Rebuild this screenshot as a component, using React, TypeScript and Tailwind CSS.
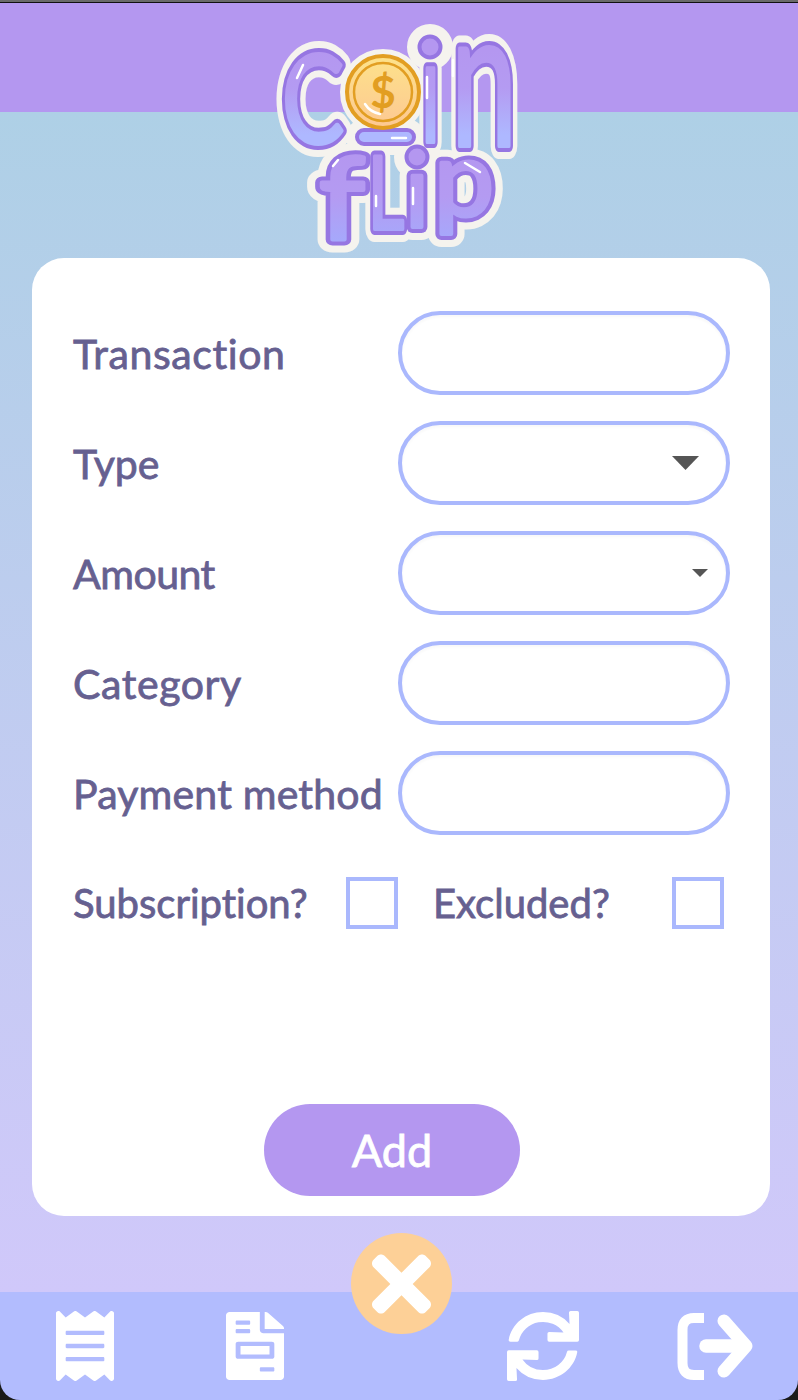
import { FaReceipt, FaFileInvoice, FaSync, FaTimes } from "react-icons/fa";

const topLetters = [
  { ch: "C", x: 22, y: 143, size: 122, len: 62 },
  { ch: "ı", x: 160.5, y: 142, size: 146, len: 20 },
  { ch: "n", x: 191, y: 146, size: 192, len: 66 },
];

const bottomLetters = [
  { ch: "f", x: 59, y: 240, size: 114, len: 46 },
  { ch: "L", x: 108, y: 229, size: 101, len: 36 },
  { ch: "ı", x: 145, y: 227, size: 101, len: 24 },
  { ch: "p", x: 174, y: 216, size: 104, len: 60 },
];

const Logo = () => {
  return (
    <svg viewBox="0 0 280 270" className="absolute left-[260px] top-0 w-[280px] h-[270px]">
      <defs>
        <linearGradient id="coinTop" gradientUnits="userSpaceOnUse" x1="0" y1="50" x2="0" y2="135">
          <stop offset="0" stopColor="#b497f0" />
          <stop offset="0.45" stopColor="#b49bf2" />
          <stop offset="1" stopColor="#aeb8ff" />
        </linearGradient>
        <linearGradient id="flipBottom" gradientUnits="userSpaceOnUse" x1="0" y1="155" x2="0" y2="240">
          <stop offset="0" stopColor="#b497f0" />
          <stop offset="0.5" stopColor="#b49bf2" />
          <stop offset="1" stopColor="#a6a8fb" />
        </linearGradient>
        <linearGradient id="coinFace" x1="0" y1="0" x2="0" y2="1">
          <stop offset="0" stopColor="#fde28a" />
          <stop offset="1" stopColor="#fdc893" />
        </linearGradient>
        <g id="wordTop" fontFamily="Lato, sans-serif" strokeLinejoin="round" strokeLinecap="round">
          {topLetters.map((l, i) => (
            <text key={i} x={l.x} y={l.y} fontSize={l.size} textLength={l.len} lengthAdjust="spacingAndGlyphs">
              {l.ch}
            </text>
          ))}
        </g>
        <g id="wordBottom" fontFamily="Lato, sans-serif" strokeLinejoin="round" strokeLinecap="round">
          {bottomLetters.map((l, i) => (
            <text key={i} x={l.x} y={l.y} fontSize={l.size} textLength={l.len} lengthAdjust="spacingAndGlyphs">
              {l.ch}
            </text>
          ))}
        </g>
      </defs>

      {/* sticker edge */}
      <g stroke="#f5f3ee" strokeWidth="26" fill="#f5f3ee">
        <use href="#wordTop" />
        <use href="#wordBottom" />
        <circle cx="170" cy="47" r="10" />
        <circle cx="157" cy="157" r="10" />
        <circle cx="123" cy="92" r="30" />
        <rect x="99" y="132" width="53" height="10" rx="5" />
      </g>

      {/* outline */}
      <g stroke="#9676e2" strokeWidth="12" fill="#9676e2">
        <use href="#wordTop" />
        <use href="#wordBottom" />
      </g>

      {/* body */}
      <use href="#wordTop" stroke="url(#coinTop)" strokeWidth="4" fill="url(#coinTop)" />
      <use href="#wordBottom" stroke="url(#flipBottom)" strokeWidth="4" fill="url(#flipBottom)" />

      <circle cx="170" cy="47" r="10.5" fill="#b497f0" stroke="#9676e2" strokeWidth="4" />
      <circle cx="157" cy="157" r="10.5" fill="#b497f0" stroke="#9676e2" strokeWidth="4" />
      <rect x="97" y="130" width="57" height="14" rx="7" fill="#aeb8ff" stroke="#9676e2" strokeWidth="4" />

      <circle cx="123" cy="92" r="36" fill="url(#coinFace)" stroke="#e29e22" strokeWidth="4" />
      <circle cx="123" cy="92" r="29" fill="none" stroke="#e29e22" strokeWidth="2.5" />
      <text x="123" y="108" textAnchor="middle" fontFamily="Lato, sans-serif" fontWeight="700" fontSize="44" fill="#e29e22">
        $
      </text>

      <g stroke="#ffffff" strokeWidth="2.5" strokeLinecap="round" fill="none">
        <path d="M37 78 L43 65" />
        <path d="M167 77 V98" />
        <path d="M193 60 V76" />
        <path d="M132 138 H146" />
        <path d="M73 166 L78 160" />
        <path d="M116 196 V206" />
        <path d="M153 188 V204" />
        <path d="M205 163 L220 172" />
        <path d="M105 104 Q110 112 120 114" />
      </g>
    </svg>
  );
};

const SignOutIcon = ({ className }: { className: string }) => {
  return (
    <svg viewBox="0 0 76 67" className={className} fill="none" stroke="currentColor">
      <path d="M27 5 H17 Q5.5 5 5.5 17 V50 Q5.5 62 17 62 H27" strokeWidth="10" strokeLinejoin="round" />
      <path d="M29 33 H65" strokeWidth="13.5" strokeLinecap="round" />
      <path d="M47 8 L69 33 L47 58" strokeWidth="13" strokeLinecap="round" strokeLinejoin="round" />
    </svg>
  );
};

const Field = ({ label, spacing, arrow }: { label: string; spacing?: string; arrow?: "large" | "small" }) => {
  return (
    <div className="flex items-center justify-between h-[84px]">
      <span className={`text-[41px] leading-none text-[#666090] [-webkit-text-stroke:0.8px] [font-variant-ligatures:none] ${spacing ?? ""}`}>{label}</span>
      <div className="w-[332px] h-[84px] shrink-0 flex items-center justify-end border-4 border-[#aab8fd] rounded-full bg-white shadow-[inset_0_2px_3px_rgba(0,0,0,0.03)]">
        {arrow === "large" && (
          <svg viewBox="0 0 27 14" className="w-[27px] h-[14px] mr-[27px]">
            <path d="M0 0 H27 L13.5 14 Z" fill="#555555" />
          </svg>
        )}
        {arrow === "small" && (
          <svg viewBox="0 0 16 8" className="w-[16px] h-[8px] mr-[18px]">
            <path d="M0 0 H16 L8 8 Z" fill="#555555" />
          </svg>
        )}
      </div>
    </div>
  );
};

const Check = ({ label, width }: { label: string; width: string }) => {
  return (
    <div className={`flex items-center justify-between ${width}`}>
      <span className="text-[40px] leading-none text-[#666090] [-webkit-text-stroke:0.8px] [font-variant-ligatures:none]">{label}</span>
      <div className="w-[52px] h-[52px] shrink-0 border-4 border-[#aab8fd] bg-white"></div>
    </div>
  );
};

export default function App() {
  return (
    <div className="relative w-[798px] h-[1400px] bg-[#1a1a1a] overflow-hidden font-['Lato']">
      <div className="h-[2px] bg-[#6a6a6a]"></div>
      <div className="h-px bg-[#111111]"></div>

      <div className="flex flex-col h-[1397px] rounded-b-[20px] overflow-hidden">
        <header className="h-[109px] shrink-0 bg-[#b497f0]"></header>

        <main className="flex-1 pt-[146px] pl-[32px] pr-[28px] pb-[76px] bg-gradient-to-b from-[#aed0e6] to-[#d0c8fa]">
          <section className="flex flex-col h-full pt-[53px] pb-[20px] pl-[41px] pr-[40px] bg-white rounded-[32px]">
            <div className="flex flex-col gap-[26px]">
              <Field label="Transaction" spacing="tracking-[0.6px]" />
              <Field label="Type" arrow="large" />
              <Field label="Amount" spacing="tracking-[-0.5px]" arrow="small" />
              <Field label="Category" spacing="tracking-[0.6px]" />
              <Field label="Payment method" spacing="tracking-[0.2px]" />
            </div>
            <div className="flex gap-[35px] mt-[42px]">
              <Check label="Subscription?" width="w-[325px]" />
              <Check label="Excluded?" width="w-[291px]" />
            </div>
            <button className="self-start ml-[191px] w-[256px] h-[92px] mt-auto rounded-full bg-[#b497f0] text-white text-[45px] leading-none [-webkit-text-stroke:0.8px]">
              Add
            </button>
          </section>
        </main>

        <nav className="h-[108px] shrink-0 flex items-center pl-[56px] bg-[#b2bcfe] text-white">
          <FaReceipt className="w-[58px] h-[70px]" preserveAspectRatio="none" />
          <FaFileInvoice className="w-[58px] h-[68px] ml-[112px]" preserveAspectRatio="none" />
          <FaSync className="w-[72px] h-[70px] ml-[223px]" preserveAspectRatio="none" />
          <SignOutIcon className="w-[76px] h-[67px] ml-[98px]" />
        </nav>
      </div>

      <button className="absolute left-[351px] top-[1233px] w-[101px] h-[101px] flex items-center justify-center rounded-full bg-[#fdd097] text-white">
        <FaTimes className="w-[59px] h-[86px] shrink-0" preserveAspectRatio="none" />
      </button>

      <Logo />
    </div>
  );
}
